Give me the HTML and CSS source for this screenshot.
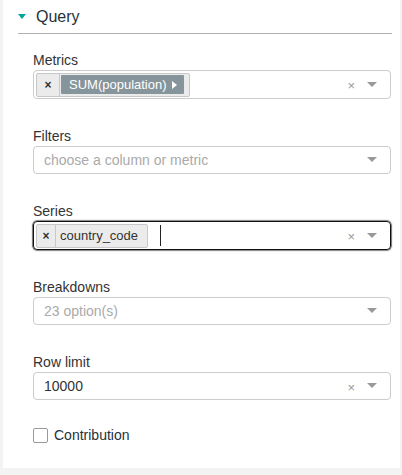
FILE: index.html
```html
<!DOCTYPE html>
<html>
<head>
<meta charset="utf-8">
<link rel="stylesheet" href="styles.css">
</head>
<body>
<div class="panel">
  <div class="panel-head">
    <span class="caret"></span>
    <span class="title">Query</span>
  </div>
  <div class="fields">
    <div class="group">
      <div class="label">Metrics</div>
      <div class="select multi">
        <div class="values">
          <div class="tag">
            <span class="tag-x wide">×</span>
            <span class="metric">SUM(population) <span class="tri-right"></span></span>
          </div>
        </div>
        <span class="clear">×</span>
        <span class="arrow"></span>
      </div>
    </div>
    <div class="group">
      <div class="label">Filters</div>
      <div class="select">
        <div class="values"><span class="placeholder">choose a column or metric</span></div>
        <span class="arrow"></span>
      </div>
    </div>
    <div class="group">
      <div class="label">Series</div>
      <div class="select multi focused">
        <div class="values">
          <div class="tag">
            <span class="tag-x">×</span>
            <span class="tag-text">country_code</span>
          </div>
          <span class="cursor"></span>
        </div>
        <span class="clear">×</span>
        <span class="arrow"></span>
      </div>
    </div>
    <div class="group">
      <div class="label">Breakdowns</div>
      <div class="select">
        <div class="values"><span class="placeholder">23 option(s)</span></div>
        <span class="arrow"></span>
      </div>
    </div>
    <div class="group">
      <div class="label">Row limit</div>
      <div class="select">
        <div class="values"><span class="value">10000</span></div>
        <span class="clear">×</span>
        <span class="arrow"></span>
      </div>
    </div>
    <label class="check">
      <span class="box"></span>
      <span>Contribution</span>
    </label>
  </div>
</div>
</body>
</html>
```

FILE: styles.css
```css
html, body {
  margin: 0;
  padding: 0;
}
body {
  background: #f3f3f3;
  font-family: "Liberation Sans", Arial, sans-serif;
  color: #333;
  width: 402px;
  height: 475px;
  overflow: hidden;
}
.panel {
  background: #fff;
  margin-left: 3px;
  width: 397px;
  height: 468px;
  box-sizing: border-box;
  padding: 0 8px 0 15px;
}
.panel-head {
  height: 34px;
  border-bottom: 1px solid #b0b0b0;
  display: flex;
  align-items: center;
  padding-top: 1px;
  box-sizing: border-box;
}
.caret {
  width: 0;
  height: 0;
  border-left: 4.5px solid transparent;
  border-right: 4.5px solid transparent;
  border-top: 5px solid #00a699;
  margin-right: 10px;
  margin-top: -1px;
}
.title {
  font-size: 16px;
  color: #263238;
}
.fields {
  padding: 16px 1px 0 15px;
}
.group {
  margin-bottom: 27px;
}
.label {
  font-size: 14px;
  line-height: 20px;
  color: #333;
}
.select {
  height: 28px;
  border: 1px solid #ccc;
  border-radius: 4px;
  box-sizing: border-box;
  display: flex;
  align-items: center;
  padding: 0 13px 0 10px;
  font-size: 14px;
}
.select.multi {
  height: 29px;
  padding-left: 2px;
}
.select.focused {
  border: 1px solid #111;
  box-shadow: 0 0 0 0.6px #333, 0 0 0 2px rgba(0, 0, 0, 0.06);
}
.values {
  flex: 1;
  display: flex;
  align-items: center;
  min-width: 0;
}
.placeholder {
  color: #aaa;
}
.value {
  color: #333;
}
.tag {
  height: 24px;
  box-sizing: border-box;
  display: flex;
  align-items: center;
  background: #ebebeb;
  border: 1px solid #c8c8c8;
  border-radius: 2px;
  font-size: 13px;
}
.tag-x {
  width: 19px;
  height: 100%;
  box-sizing: border-box;
  display: flex;
  align-items: center;
  justify-content: center;
  border-right: 1px solid #c8c8c8;
  font-size: 12px;
  font-weight: bold;
  color: #333;
}
.tag-x.wide {
  width: 23px;
}
.metric {
  margin: 0 5px 0 1px;
  height: 19px;
  background: #86959b;
  color: #fff;
  border-radius: 1px;
  display: flex;
  align-items: center;
  padding: 0 7px 0 8px;
  font-size: 13px;
}
.tri-right {
  width: 0;
  height: 0;
  border-top: 4px solid transparent;
  border-bottom: 4px solid transparent;
  border-left: 5px solid #fff;
  margin-left: 5px;
}
.tag-text {
  padding: 0 9px 0 4px;
  color: #333;
}
.cursor {
  width: 1px;
  height: 21px;
  background: #222;
  margin-left: 12px;
}
.clear {
  color: #999;
  font-size: 13px;
  margin-right: 12px;
  margin-top: 2px;
}
.arrow {
  width: 0;
  height: 0;
  border-left: 5px solid transparent;
  border-right: 5px solid transparent;
  border-top: 5px solid #999;
  margin-top: -1px;
}
.check {
  display: flex;
  align-items: center;
  font-size: 14px;
  color: #263238;
  margin-top: 1px;
}
.box {
  width: 13px;
  height: 13px;
  border: 1px solid #999;
  border-radius: 2px;
  margin-right: 6px;
}
```
